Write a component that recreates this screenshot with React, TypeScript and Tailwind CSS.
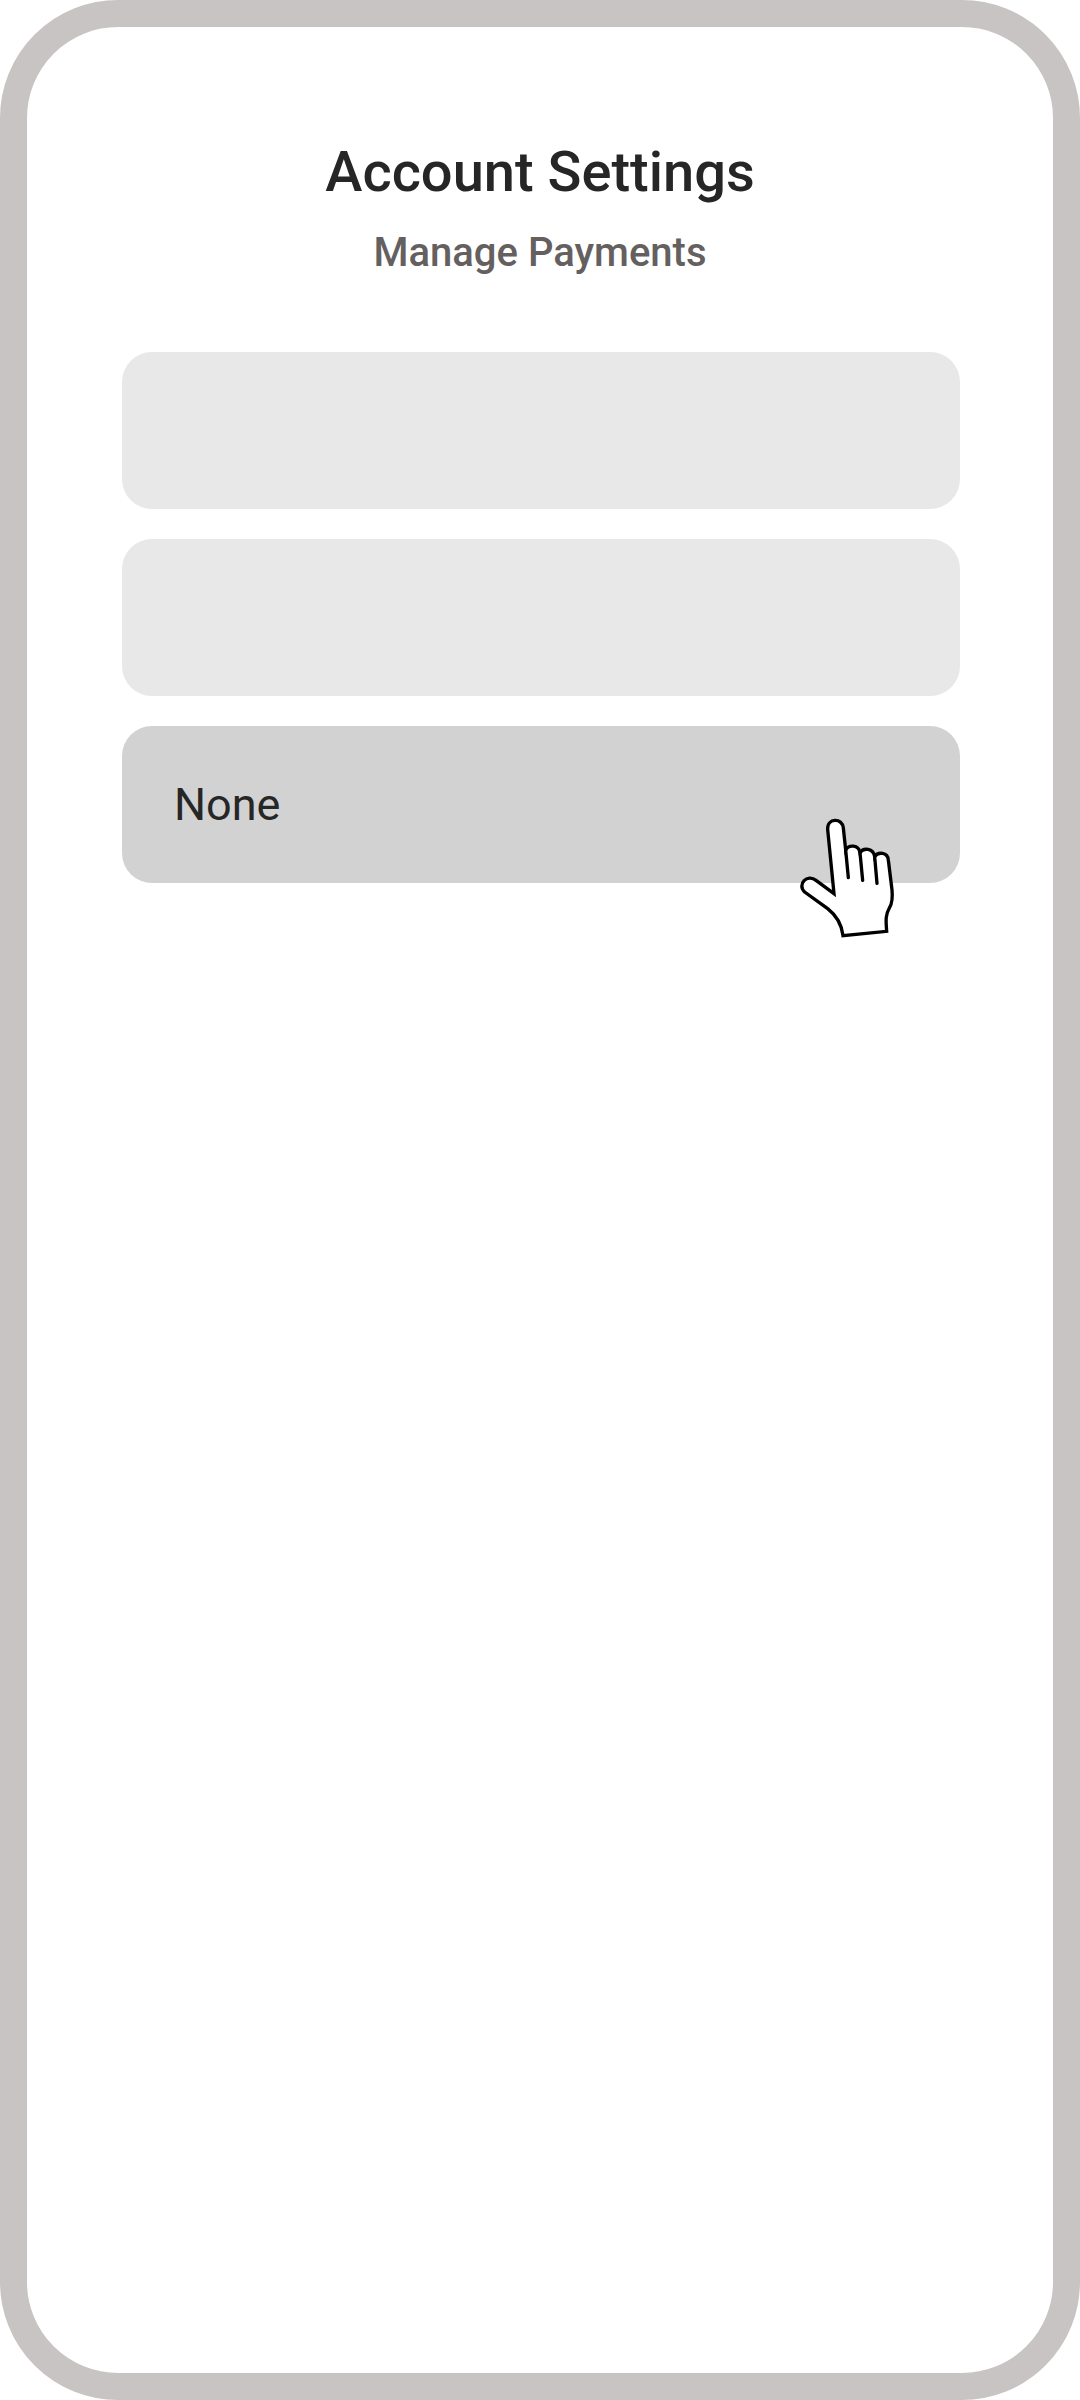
import React from 'react'

function HandCursor() {
  return (
    <svg
      className="absolute right-[60px] top-[89px] w-[105px] h-[125px] pointer-events-none"
      viewBox="45 75 315 375"
      fill="white"
      stroke="black"
      strokeWidth="10"
      strokeLinecap="round"
      strokeLinejoin="round"
      aria-hidden="true"
    >
      <path
        strokeLinejoin="miter"
        d="M162 311 L143 118 C141 84 187 82 190 114 L197 180 C206 163 236 164 240 188 C250 172 280 174 284 200 C294 184 323 187 325 210 L336 300 C338 322 335 342 329 352 C315 378 318 392 320 424 L189 437 C185 402 170 377 143 356 L74 306 C50 283 82 250 108 271 Z"
      />
      <path d="M197 180 L205 263 M240 188 L248 271 M284 200 L291 280" fill="none" />
    </svg>
  )
}

function App() {
  return (
    <div className="min-h-screen bg-white font-[Roboto,sans-serif]">
      <main className="min-h-screen rounded-[118px] border-[27px] border-[#c8c4c3] bg-white pt-[113px] pb-24">
        <h1 className="text-center text-[56px] leading-[64px] font-medium text-[#262626]">Account Settings</h1>
        <h2 className="mt-[25px] text-center text-[40px] leading-[48px] font-medium text-[#656060]">Manage Payments</h2>
        <div className="mt-[75px] flex flex-col gap-[30px] pl-[95px] pr-[93px]">
          <button type="button" aria-label="Payment method 1" className="h-[157px] w-full rounded-[30px] bg-[#e8e8e8]"></button>
          <button type="button" aria-label="Payment method 2" className="h-[157px] w-full rounded-[30px] bg-[#e8e8e8]"></button>
          <div className="relative">
            <button type="button" className="block h-[157px] w-full rounded-[30px] bg-[#d2d2d2] px-[52px] text-left text-[45px] text-[#262626]">
              None
            </button>
            <HandCursor />
          </div>
        </div>
      </main>
    </div>
  )
}

export default App
